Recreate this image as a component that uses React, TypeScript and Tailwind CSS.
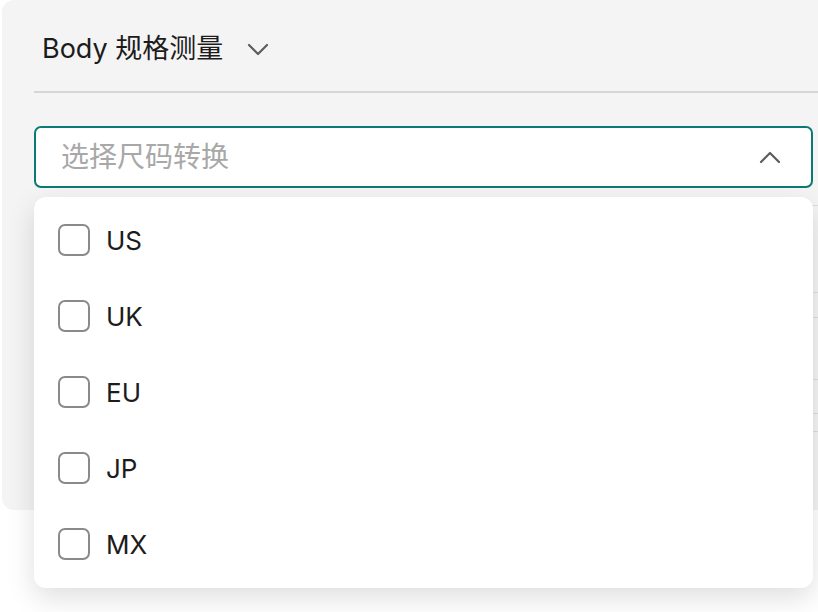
import { useState } from 'react';

const OPTIONS = ['US', 'UK', 'EU', 'JP', 'MX'];

// Lignes du tableau caché derrière la liste
const TABLE_ROWS = [87, 25, 62, 34, 18];

function Chevron({ up = false }: { up?: boolean }) {
  return (
    <svg width="22" height="14" viewBox="0 0 22 14" fill="none">
      <path
        d={up ? 'M2 12 L11 3 L20 12' : 'M2 2 L11 11 L20 2'}
        stroke="#5c5c5c"
        strokeWidth="2.2"
        strokeLinecap="round"
        strokeLinejoin="round"
      />
    </svg>
  );
}

export default function App() {
  const [checked, setChecked] = useState<string[]>([]);

  const toggle = (opt: string) =>
    setChecked((prev) => (prev.includes(opt) ? prev.filter((o) => o !== opt) : [...prev, opt]));

  return (
    <div
      className="relative w-[818px] h-[612px] bg-white overflow-hidden"
      style={{ fontFamily: 'Inter, "Noto Sans CJK SC", sans-serif' }}
    >
      {/* PANEL GRIS */}
      <div className="ml-[2px] w-[850px] h-[510px] bg-[#f4f4f4] rounded-[12px] pl-[32px] pr-[37px]">
        {/* Titre */}
        <div className="h-[91px] flex items-center gap-[24px] pl-[8px] pt-[8px]">
          <span className="text-[27px] text-[#1c1c1c]">Body 规格测量</span>
          <Chevron />
        </div>
        <div className="h-[2px] bg-[#d6d6d6] -mr-[40px]" />

        {/* Select */}
        <div className="w-[779px] mt-[33px] h-[62px] bg-white border-2 border-[#0b7a74] rounded-[7px] flex items-center justify-between pl-[25px] pr-[30px]">
          <span className="text-[28px] text-[#a8a8a8]">选择尺码转换</span>
          <Chevron up />
        </div>

        {/* Tableau derrière */}
        <div className="mt-[17px] -mr-[40px] border-t border-[#dedede]">
          {TABLE_ROWS.map((h, i) => (
            <div key={i} className="border-b border-[#dedede]" style={{ height: h }} />
          ))}
        </div>
      </div>

      {/* LISTE DÉROULANTE */}
      <div className="absolute left-[34px] top-[197px] w-[779px] bg-white rounded-[12px] pt-[5px] pb-[6px] shadow-[0_10px_28px_rgba(0,0,0,0.13)]">
        {OPTIONS.map((opt) => (
          <label key={opt} className="h-[76px] flex items-center gap-[16px] pl-[24px] cursor-pointer">
            <span
              onClick={() => toggle(opt)}
              className={`w-[32px] h-[32px] rounded-[7px] border-2 ${
                checked.includes(opt) ? 'border-[#0b7a74] bg-[#0b7a74]' : 'border-[#8a8a8a] bg-white'
              }`}
            />
            <span className="text-[26px] text-[#1c1c1c]">{opt}</span>
          </label>
        ))}
      </div>
    </div>
  );
}
